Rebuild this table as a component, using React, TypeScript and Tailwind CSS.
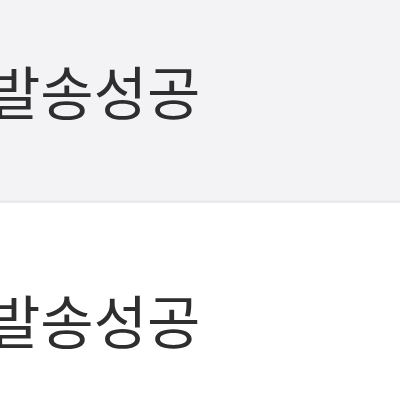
export default function App() {
  const rows = ["bg-[#f3f3f6]", "bg-white"];
  return (
    <div className="w-[400px] h-[400px] overflow-hidden bg-white" style={{ fontFamily: '"Noto Sans CJK KR", "Noto Sans", sans-serif' }}>
      <div className="-mt-[26px] -ml-[13px] flex flex-col">
        {rows.map((bg, i) => (
          <div key={i} className={`${bg} h-[229px] pt-[6px] flex items-center border-b-[3px] border-[#ebebeb]`}>
            <span className="text-[58px] leading-none font-normal text-[#2e2e2e]">발송성공</span>
          </div>
        ))}
      </div>
    </div>
  );
}
